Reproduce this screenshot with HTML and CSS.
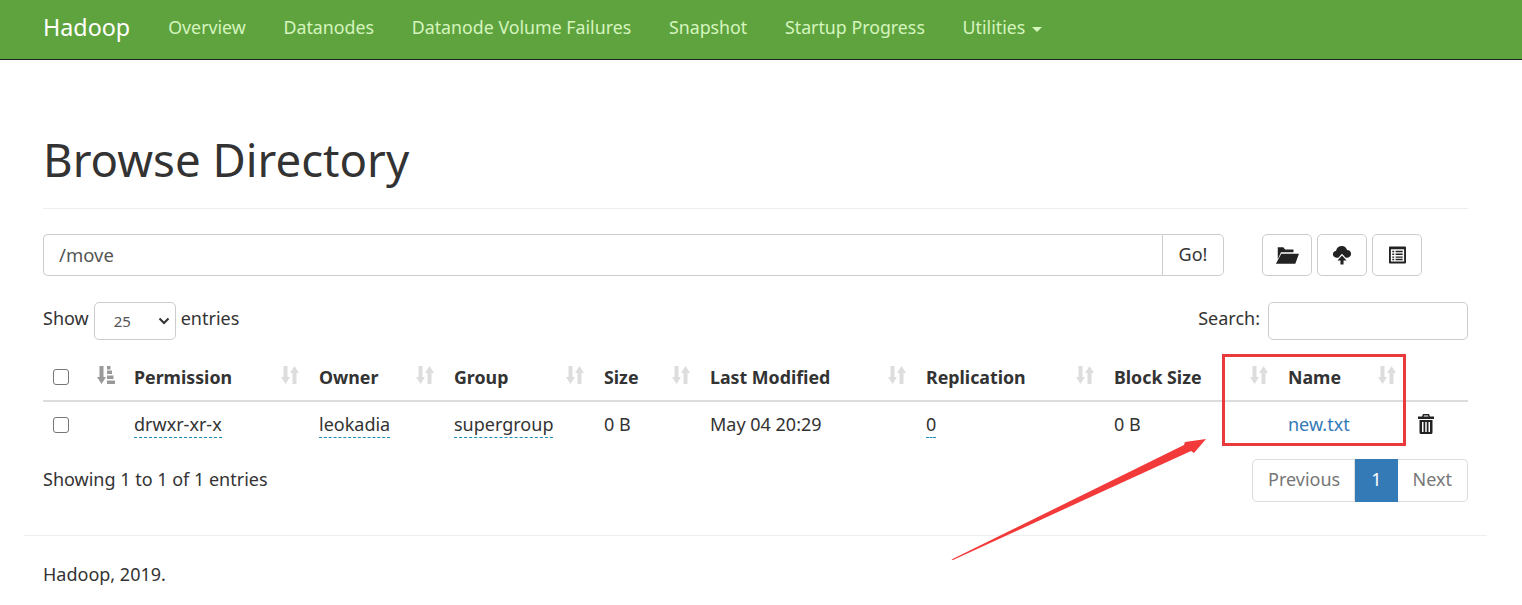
FILE: index.html
```html
<!DOCTYPE html>
<html lang="en">
<head>
    <meta charset="UTF-8">
    <title>Browsing HDFS</title>
    <link rel="stylesheet" href="styles.css">
</head>
<body>
    <svg class="icon-defs" width="0" height="0">
        <symbol id="sort-both" viewBox="0 0 18 18">
            <path d="M2.500 0h4v11h2.500l-4.500 7L0 11h2.500zM13.500 0L18 7h-2.500v11h-4V7H9z"/>
        </symbol>
    </svg>

    <nav class="navbar">
        <a class="brand" href="#">Hadoop</a>
        <a class="nav-link" href="#">Overview</a>
        <a class="nav-link" href="#">Datanodes</a>
        <a class="nav-link" href="#">Datanode Volume Failures</a>
        <a class="nav-link" href="#">Snapshot</a>
        <a class="nav-link" href="#">Startup Progress</a>
        <a class="nav-link" href="#">Utilities <span class="caret"></span></a>
    </nav>

    <div class="container">
        <div class="page-header">
            <h1>Browse Directory</h1>
        </div>

        <div class="toolbar">
            <div class="path-group">
                <input class="path-input" type="text" value="/move">
                <button class="go-btn">Go!</button>
            </div>
            <div class="tool-buttons">
                <button class="tool-btn">
                    <svg width="24" height="19" viewBox="0 0 26 20"><path d="M3 1h6l2 2.500h9v3H6.500L3 14zM6.800 8H26l-4 11H1z"/></svg>
                </button>
                <button class="tool-btn">
                    <svg width="20" height="20" viewBox="0 0 22 22"><path d="M11 1c3 0 5 2 5.500 4.500 2.500 0 4.500 1.800 4.500 4.200 0 2.300-2 4.300-4.500 4.300H15l-4-4.500L7 14H5c-2.500 0-4-1.800-4-4 0-2 1.500-3.500 3.500-3.800C5 3 7.500 1 11 1zM11 11.500l5 5.500h-3.300v4.500H9.300V17H6z"/></svg>
                </button>
                <button class="tool-btn">
                    <svg width="17" height="18" viewBox="0 0 18 18"><path fill-rule="evenodd" d="M1 0h16a1 1 0 0 1 1 1v16a1 1 0 0 1-1 1H1a1 1 0 0 1-1-1V1a1 1 0 0 1 1-1zM2 3v13h14V3zM3.500 4.500h2v1.500h-2zM7 4.500h7.500v1.500H7zM3.500 7.500h2V9h-2zM7 7.500h7.500V9H7zM3.500 10.500h2V12h-2zM7 10.500h7.500V12H7zM3.500 13h2v1.500h-2zM7 13h7.500v1.500H7z"/></svg>
                </button>
            </div>
        </div>

        <div class="table-controls">
            <div class="length-control">
                Show
                <span class="select-box">25
                    <svg width="12" height="8" viewBox="0 0 12 8"><path d="M1.500 1.500L6 6l4.500-4.500" fill="none" stroke="#333" stroke-width="2"/></svg>
                </span>
                entries
            </div>
            <div class="search-control">
                Search:
                <input class="search-input" type="text">
            </div>
        </div>

        <table class="files-table">
            <colgroup>
                <col class="col-check">
                <col class="col-perm">
                <col class="col-owner">
                <col class="col-group">
                <col class="col-size">
                <col class="col-modified">
                <col class="col-repl">
                <col class="col-block">
                <col class="col-name">
                <col class="col-trash">
            </colgroup>
            <thead>
                <tr>
                    <th class="check-head">
                        <span class="checkbox"></span>
                        <svg class="sort-active" width="18" height="18" viewBox="0 0 18 18"><path d="M2.500 0h4v11h2.500l-4.500 7L0 11h2.500zM10 0h3.500v3.500H10zM10 4.500h5v3.500h-5zM10 9.500h6.500V13H10zM10 14.500h8V18h-8z"/></svg>
                    </th>
                    <th>Permission<svg class="sort-icon"><use href="#sort-both"/></svg></th>
                    <th>Owner<svg class="sort-icon"><use href="#sort-both"/></svg></th>
                    <th>Group<svg class="sort-icon"><use href="#sort-both"/></svg></th>
                    <th>Size<svg class="sort-icon"><use href="#sort-both"/></svg></th>
                    <th>Last Modified<svg class="sort-icon"><use href="#sort-both"/></svg></th>
                    <th>Replication<svg class="sort-icon"><use href="#sort-both"/></svg></th>
                    <th>Block Size<svg class="sort-icon"><use href="#sort-both"/></svg></th>
                    <th>Name<svg class="sort-icon"><use href="#sort-both"/></svg></th>
                    <th></th>
                </tr>
            </thead>
            <tbody>
                <tr>
                    <td class="icon-cell"><span class="checkbox"></span></td>
                    <td><span class="editable">drwxr-xr-x</span></td>
                    <td><span class="editable">leokadia</span></td>
                    <td><span class="editable">supergroup</span></td>
                    <td>0 B</td>
                    <td>May 04 20:29</td>
                    <td><span class="editable">0</span></td>
                    <td>0 B</td>
                    <td><a class="file-link" href="#">new.txt</a></td>
                    <td class="icon-cell">
                        <svg class="trash" width="16" height="20" viewBox="0 0 16 20"><path fill-rule="evenodd" d="M5 0h6l1 2.500h4V5H0V2.500h4zM6 1.500l-.4 1h4.800l-.4-1zM1.500 6h13v12.500a1.500 1.500 0 0 1-1.500 1.500H3a1.500 1.500 0 0 1-1.500-1.500zM4 8v10h1.500V8zM7.250 8v10h1.500V8zM10.500 8v10H12V8z"/></svg>
                    </td>
                </tr>
            </tbody>
        </table>

        <div class="table-footer">
            <div class="info">Showing 1 to 1 of 1 entries</div>
            <div class="pagination">
                <a class="page-item" href="#">Previous</a>
                <a class="page-item active" href="#">1</a>
                <a class="page-item" href="#">Next</a>
            </div>
        </div>

        <hr class="footer-rule">
        <p class="footer-text">Hadoop, 2019.</p>
    </div>

    <!-- red annotation drawn on top of the screenshot -->
    <div class="mark-box"></div>
    <svg class="mark-arrow" width="270" height="130" viewBox="0 0 270 130">
        <path d="M1.500 125.500L234 11L235 8L256 5L244 19L241 17L3 126Z" fill="#f23a3a"/>
    </svg>
</body>
</html>
```

FILE: styles.css
```css
* {
    box-sizing: border-box;
}

body {
    margin: 0;
    font-family: 'Noto Sans', 'Open Sans', sans-serif;
    font-size: 18px;
    line-height: 1.4;
    color: #333;
    background: #fff;
    position: relative;
}

.icon-defs {
    position: absolute;
}

.navbar {
    display: flex;
    align-items: center;
    height: 60px;
    padding-left: 43px;
    padding-bottom: 4px;
    background: #5fa33e;
    border-bottom: 1px solid #222;
}

.brand {
    color: #fff;
    font-size: 23.3px;
    text-decoration: none;
    margin-right: 38px;
}

.nav-link {
    color: #d5f5be;
    font-size: 17.8px;
    text-decoration: none;
    margin-right: 37.7px;
}

.caret {
    display: inline-block;
    width: 0;
    height: 0;
    margin-left: 2px;
    vertical-align: middle;
    border-top: 5px solid #d5f5be;
    border-left: 5px solid transparent;
    border-right: 5px solid transparent;
}

.container {
    width: 1463px;
    margin-left: 24px;
    padding: 0 19px;
}

.page-header {
    margin-top: 68px;
    padding-bottom: 18px;
    border-bottom: 1px solid #eee;
}

h1 {
    margin: 0;
    font-size: 45.6px;
    font-weight: 400;
    line-height: 62px;
}

.toolbar {
    display: flex;
    justify-content: space-between;
    margin-top: 25px;
}

.path-group {
    display: flex;
    width: 1181px;
    height: 42px;
}

.path-input {
    flex: 1;
    padding: 0 15px;
    border: 1px solid #ccc;
    border-right: none;
    border-radius: 5px 0 0 5px;
    font: inherit;
    font-size: 18.5px;
    color: #555;
}

.go-btn {
    width: 62px;
    border: 1px solid #ccc;
    border-radius: 0 5px 5px 0;
    background: #fff;
    font: inherit;
    color: #333;
}

.tool-buttons {
    display: flex;
    gap: 5px;
    margin-right: 46px;
}

.tool-btn {
    display: flex;
    align-items: center;
    justify-content: center;
    width: 50px;
    height: 42px;
    padding: 0;
    border: 1px solid #ccc;
    border-radius: 5px;
    background: #fff;
    color: #222;
}

.tool-btn svg {
    fill: #222;
}

.table-controls {
    display: flex;
    justify-content: space-between;
    align-items: center;
    margin-top: 26px;
}

.length-control {
    display: flex;
    align-items: flex-start;
    gap: 5px;
    line-height: 32px;
}

.select-box {
    display: flex;
    align-items: center;
    justify-content: space-between;
    width: 82px;
    height: 38px;
    padding: 0 5px 0 19px;
    border: 1px solid #ccc;
    border-radius: 5px;
    font-size: 15px;
    color: #555;
}

.search-control {
    display: flex;
    align-items: flex-start;
    gap: 8px;
    line-height: 32px;
}

.search-input {
    width: 200px;
    height: 38px;
    border: 1px solid #ccc;
    border-radius: 5px;
}

.files-table {
    width: 1425px;
    margin-top: 13px;
    border-collapse: collapse;
    table-layout: fixed;
}

.col-check { width: 81px; }
.col-perm { width: 185px; }
.col-owner { width: 135px; }
.col-group { width: 150px; }
.col-size { width: 106px; }
.col-modified { width: 216px; }
.col-repl { width: 188px; }
.col-block { width: 174px; }
.col-name { width: 128px; }
.col-trash { width: 62px; }

th,
td {
    padding: 0 10px;
    text-align: left;
}

th {
    position: relative;
    height: 48px;
    padding-top: 2px;
    border-bottom: 2px solid #ddd;
    font-size: 17.8px;
    font-weight: 700;
}

th.check-head {
    padding-top: 0;
    padding-bottom: 2px;
}

td {
    height: 47px;
    border-bottom: 1px solid #fff;
}

td.icon-cell {
    padding-bottom: 2px;
}

.checkbox {
    display: inline-block;
    width: 16px;
    height: 16px;
    vertical-align: middle;
    border: 1px solid #767676;
    border-radius: 3px;
    background: #fff;
}

.sort-active {
    position: absolute;
    left: 54px;
    top: 13px;
    fill: #999;
}

.sort-icon {
    position: absolute;
    right: 10px;
    top: 13px;
    width: 18px;
    height: 18px;
    fill: #ddd;
}

.editable {
    display: inline-block;
    line-height: 22px;
    padding-bottom: 2px;
    border-bottom: 1px dashed #1a8fb5;
}

.file-link {
    color: #337ab7;
    text-decoration: none;
}

.trash {
    display: block;
    margin-left: 2px;
    fill: #222;
}

.table-footer {
    display: flex;
    justify-content: space-between;
    align-items: flex-start;
    margin-top: 10px;
}

.info {
    margin-top: 8px;
}

.pagination {
    display: flex;
    height: 43px;
}

.page-item {
    display: flex;
    align-items: center;
    padding: 0 15px;
    border: 1px solid #ddd;
    color: #777;
    text-decoration: none;
}

.page-item:first-child {
    padding-right: 14px;
    border-radius: 5px 0 0 5px;
}

.page-item:last-child {
    border-left: none;
    border-radius: 0 5px 5px 0;
}

.page-item.active {
    border-color: #337ab7;
    background: #337ab7;
    color: #fff;
}

.footer-rule {
    margin: 33px -19px 0;
    border: 0;
    border-top: 1px solid #eee;
}

.footer-text {
    margin: 26px 0 0;
}

.mark-box {
    position: absolute;
    left: 1222px;
    top: 354px;
    width: 184px;
    height: 92px;
    border: 3px solid #e8393c;
}

.mark-arrow {
    position: absolute;
    left: 950px;
    top: 434px;
}
```
